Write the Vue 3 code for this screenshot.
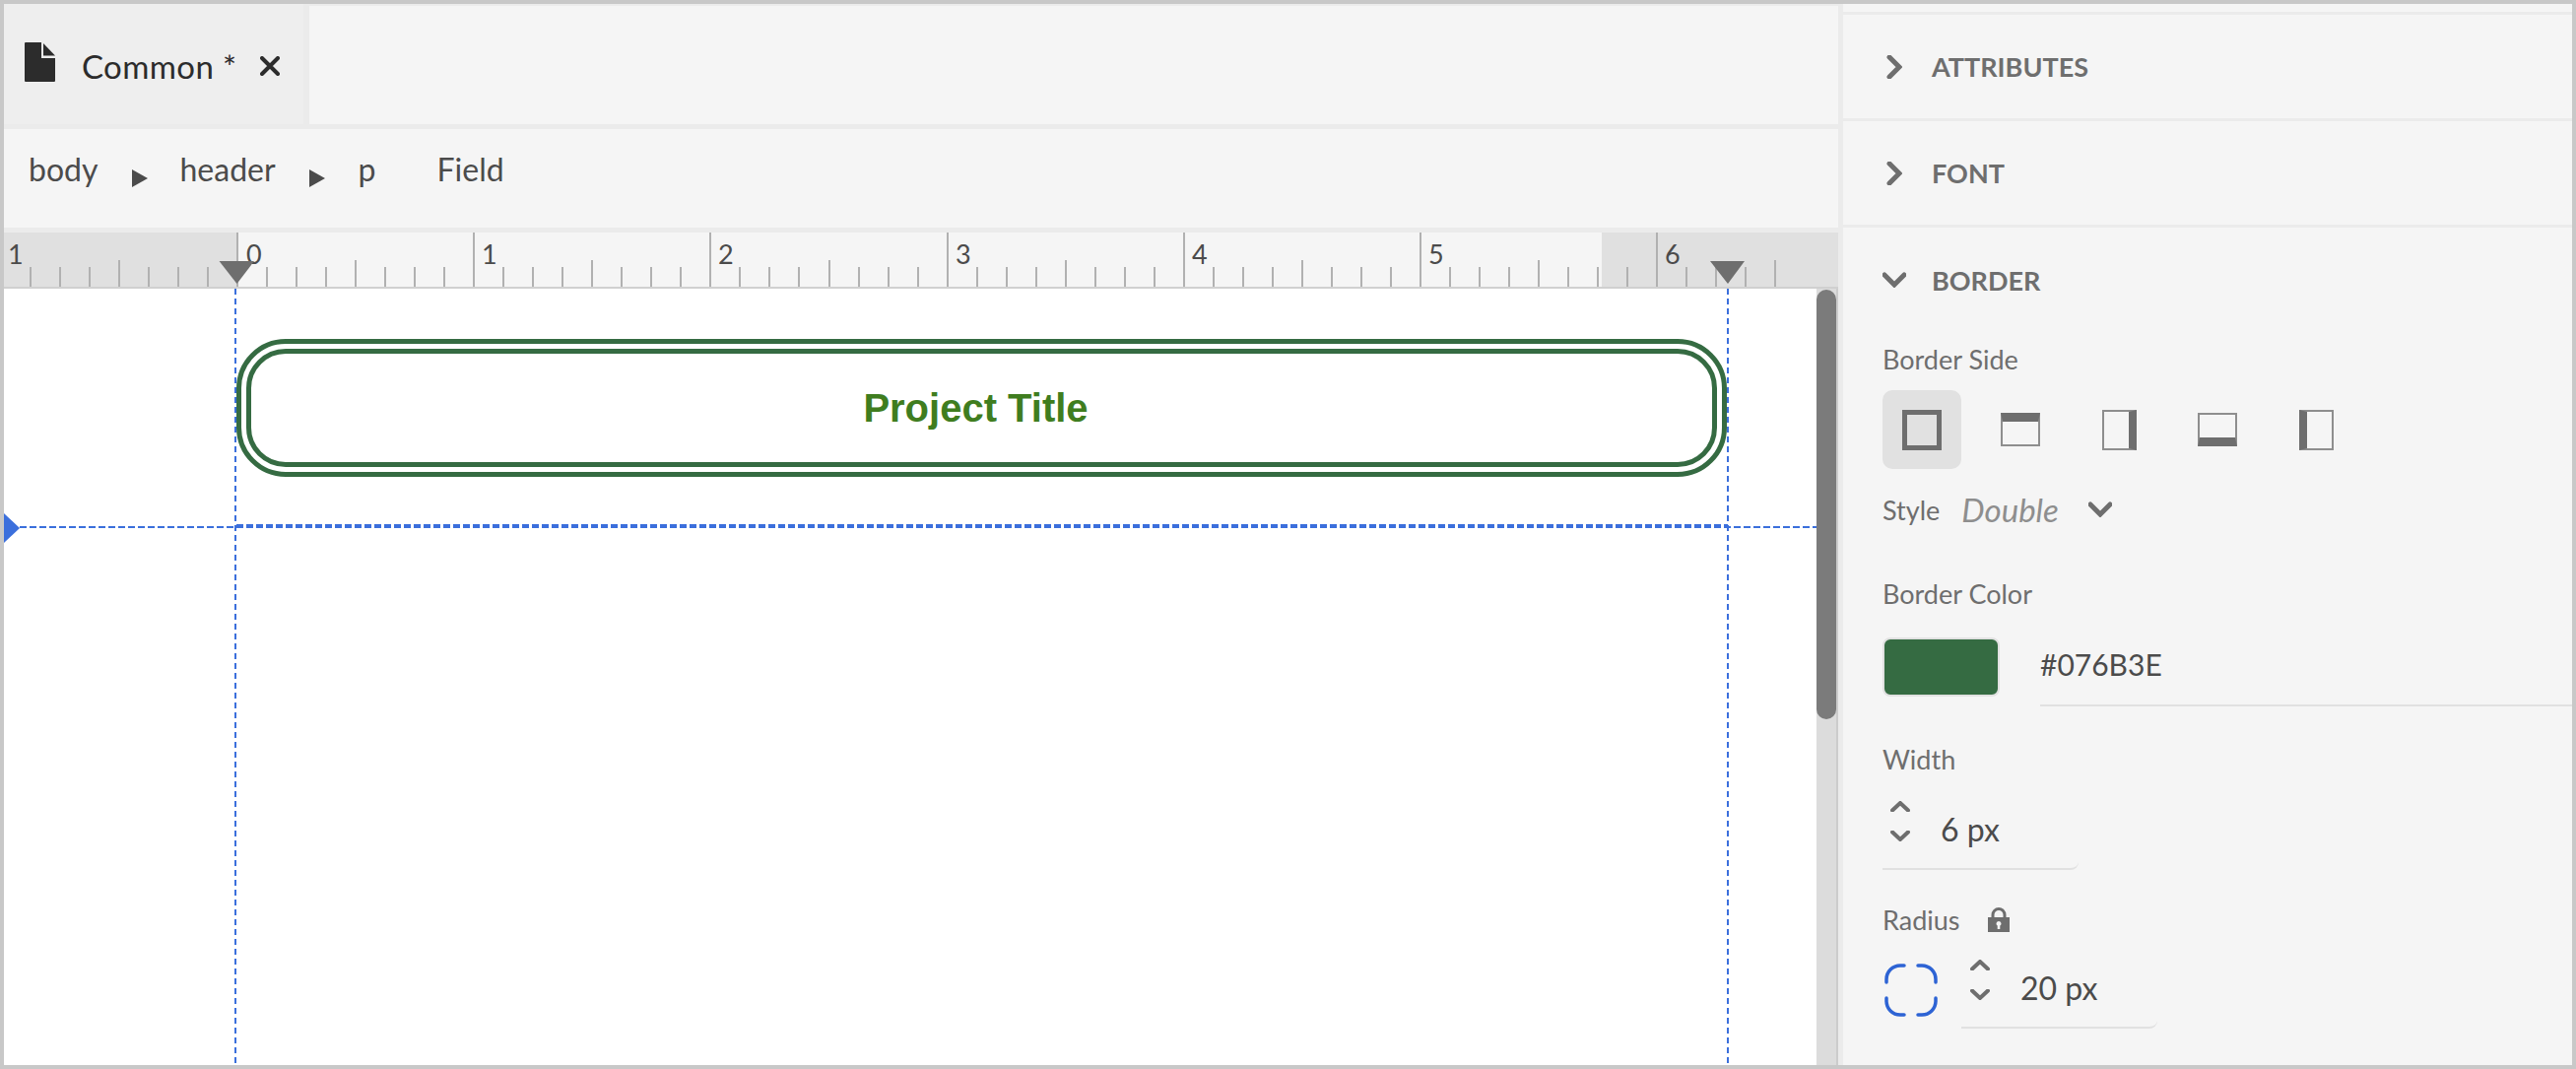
<template>
  <div class="frame">
    <div class="main">
      <!-- tabs -->
      <div class="tabbar">
        <div class="tab">
          <svg class="doc-icon" width="31" height="40" viewBox="0 0 31 40">
            <path d="M0 1 a1 1 0 0 1 1-1 H17 V16 H31 V39 a1 1 0 0 1-1 1 H1 a1 1 0 0 1-1-1 Z" fill="#2c2c2c" />
            <path d="M19 1 L31 13.500 H19 Z" fill="#2c2c2c" />
          </svg>
          <span class="tab-name">Common *</span>
          <svg class="close-icon" width="20" height="20" viewBox="0 0 20 20">
            <path d="M2 2 L18 18 M18 2 L2 18" stroke="#2c2c2c" stroke-width="4" fill="none" />
          </svg>
        </div>
        <div class="tab-rest"></div>
      </div>

      <!-- breadcrumb -->
      <div class="crumbs">
        <span class="crumb crumb-body">body</span>
        <span class="crumb-arrow"></span>
        <span class="crumb crumb-header">header</span>
        <span class="crumb-arrow"></span>
        <span class="crumb crumb-p">p</span>
        <span class="crumb crumb-field">Field</span>
      </div>

      <!-- ruler -->
      <div class="ruler">
        <svg class="ruler-svg" width="1862" height="55" viewBox="0 0 1862 55">
          <rect x="0" y="0" width="236" height="55" fill="#e0e0e0" />
          <rect x="1622" y="0" width="240" height="55" fill="#e0e0e0" />
          <rect v-for="t in ticks" :key="t.x" :x="t.x" :y="t.y" width="2" :height="55 - t.y" fill="#b1b1b1" />
          <text v-for="l in labels" :key="l.text" :x="l.x" y="32" class="ruler-num">{{ l.text }}</text>
          <path d="M218.500 29 H254 L236.500 52 Z" fill="#6e6e6e" />
          <path d="M1732 29 H1767 L1750 52 Z" fill="#6e6e6e" />
        </svg>
      </div>

      <!-- page -->
      <div class="canvas">
        <div class="field-box">
          <span class="field-title">Project Title</span>
        </div>
        <div class="guide-v guide-left"></div>
        <div class="guide-v guide-right"></div>
        <div class="guide-h guide-thin"></div>
        <div class="guide-h guide-thick"></div>
        <div class="margin-marker"></div>
        <div class="scrollbar"><div class="thumb"></div></div>
      </div>
    </div>

    <!-- properties -->
    <aside class="panel">
      <div class="section section-top"></div>
      <div class="section section-closed">
        <svg class="chev-right" width="16" height="24" viewBox="0 0 16 24">
          <path d="M3 2 L13 12 L3 22" />
        </svg>
        <span class="section-title">ATTRIBUTES</span>
      </div>
      <div class="section section-closed">
        <svg class="chev-right" width="16" height="24" viewBox="0 0 16 24">
          <path d="M3 2 L13 12 L3 22" />
        </svg>
        <span class="section-title">FONT</span>
      </div>
      <div class="section-open">
        <div class="open-head">
          <svg class="chev-down" width="24" height="16" viewBox="0 0 24 16">
            <path d="M2 3 L12 13 L22 3" />
          </svg>
          <span class="section-title">BORDER</span>
        </div>

        <div class="label label-side">Border Side</div>
        <div class="sides">
          <div class="side-btn side-active"><span class="side-icon all"></span></div>
          <div class="side-btn"><span class="side-icon wide top"></span></div>
          <div class="side-btn"><span class="side-icon tall right"></span></div>
          <div class="side-btn"><span class="side-icon wide bottom"></span></div>
          <div class="side-btn"><span class="side-icon tall left"></span></div>
        </div>

        <div class="style-row">
          <span class="label">Style</span>
          <span class="style-value">Double</span>
          <svg class="chev-down" width="24" height="16" viewBox="0 0 24 16">
            <path d="M2 3 L12 13 L22 3" />
          </svg>
        </div>

        <div class="label label-color">Border Color</div>
        <div class="color-row">
          <div class="swatch"></div>
          <div class="hex">#076B3E</div>
        </div>

        <div class="label label-width">Width</div>
        <div class="stepper stepper-width">
          <div class="arrows">
            <svg width="20" height="11" viewBox="0 0 20 11"><path d="M2 9.500 L10 2 L18 9.500" /></svg>
            <svg width="20" height="11" viewBox="0 0 20 11"><path d="M2 1.500 L10 9 L18 1.500" /></svg>
          </div>
          <span class="value">6 px</span>
        </div>

        <div class="radius-label">
          <span class="label">Radius</span>
          <svg class="lock" width="22" height="25" viewBox="0 0 22 25">
            <path d="M5 11 V7.500 a6 6 0 0 1 12 0 V11" fill="none" stroke="#6e6e6e" stroke-width="3" />
            <path fill-rule="evenodd" d="M0 10 H22 V25 H0 Z M11 14 a2.500 2.500 0 0 0-1.300 4.600 V22 h2.600 V18.600 A2.500 2.500 0 0 0 11 14 Z" fill="#6e6e6e" />
          </svg>
        </div>
        <div class="radius-row">
          <svg class="radius-icon" width="54" height="54" viewBox="0 0 54 54">
            <path d="M20 2 H16 A14 14 0 0 0 2 16 V19 M34 2 H38 A14 14 0 0 1 52 16 V19 M2 35 V38 A14 14 0 0 0 16 52 H20 M52 35 V38 A14 14 0 0 1 38 52 H34" />
          </svg>
          <div class="stepper stepper-radius">
            <div class="arrows">
              <svg width="20" height="11" viewBox="0 0 20 11"><path d="M2 9.500 L10 2 L18 9.500" /></svg>
              <svg width="20" height="11" viewBox="0 0 20 11"><path d="M2 1.500 L10 9 L18 1.500" /></svg>
            </div>
            <span class="value">20 px</span>
          </div>
        </div>
      </div>
    </aside>
  </div>
</template>

<script setup>
import { computed } from 'vue'

// ruler origin inside the svg and pixels per inch
const ZERO = 236
const INCH = 240.2

const ticks = computed(() => {
  const list = []
  for (let i = -7; i <= 52; i++) {
    const x = Math.round(ZERO + (i * INCH) / 8)
    if (x < 0 || x > 1860) continue
    let y = 35
    if (i % 8 === 0) y = 0
    else if (i % 4 === 0) y = 28
    list.push({ x, y })
  }
  return list
})

const labels = [
  { text: '1', x: 4 },
  { text: '0', x: 246 },
  ...[1, 2, 3, 4, 5, 6].map((n) => ({ text: String(n), x: Math.round(ZERO + n * INCH) + 9 }))
]
</script>

<style>
html,
body {
  margin: 0;
  background: #fff;
}
</style>

<style scoped>
.frame {
  width: 2615px;
  height: 1085px;
  box-sizing: border-box;
  border: 4px solid #c8c8c8;
  display: flex;
  overflow: hidden;
  font-family: Lato, "Noto Sans", sans-serif;
  background: #ebebeb;
}

.main {
  width: 1862px;
  flex: none;
  display: flex;
  flex-direction: column;
}

.tabbar {
  height: 122px;
  flex: none;
  display: flex;
}

.tab {
  width: 304px;
  flex: none;
  background: #eeeeee;
  display: flex;
  align-items: center;
  padding-left: 21px;
  box-sizing: border-box;
}

.doc-icon {
  margin-top: -4px;
}

.tab-name {
  margin-left: 27px;
  margin-top: 3px;
  font-size: 33px;
  letter-spacing: 0.4px;
  color: #2c2c2c;
}

.close-icon {
  margin-left: 23px;
  margin-top: 3px;
}

.tab-rest {
  flex: 1;
  margin-left: 6px;
  margin-top: 2px;
  background: #f5f5f5;
}

.crumbs {
  height: 100px;
  flex: none;
  margin-top: 5px;
  background: #f5f5f5;
  display: flex;
  align-items: center;
  padding-left: 25px;
  padding-bottom: 20px;
  box-sizing: border-box;
}

.crumb {
  font-size: 32px;
  color: #4b4b4b;
}

.crumb-arrow {
  width: 0;
  height: 0;
  border-left: 16px solid #4b4b4b;
  border-top: 9px solid transparent;
  border-bottom: 9px solid transparent;
  margin-top: 20px;
}

.crumb-body {
  margin-right: 35px;
}

.crumb-header {
  margin: 0 34px 0 32px;
}

.crumb-p {
  margin-left: 34px;
  margin-right: 62px;
}

.ruler {
  height: 57px;
  flex: none;
  margin-top: 5px;
  background: #f5f5f5;
  border-bottom: 2px solid #d0d0d0;
  box-sizing: border-box;
}

.ruler-svg {
  display: block;
}

.ruler-num {
  font-family: Lato, sans-serif;
  font-size: 27px;
  fill: #4b4b4b;
}

.canvas {
  flex: 1;
  position: relative;
  background: #fff;
  padding: 51px 0 0 236px;
  box-sizing: border-box;
  overflow: hidden;
}

.field-box {
  width: 1513px;
  height: 140px;
  box-sizing: border-box;
  border: 15px double #356b42;
  border-radius: 50px;
  display: flex;
  align-items: center;
  justify-content: center;
}

.field-title {
  font-family: "Liberation Sans", Arial, sans-serif;
  font-weight: 700;
  font-size: 40px;
  color: #3f7d1f;
  margin-right: 12px;
}

.guide-v {
  position: absolute;
  top: 0;
  bottom: 0;
  width: 2px;
  background: repeating-linear-gradient(to bottom, #3b6fdc 0 6px, transparent 6px 10px);
}

.guide-left {
  left: 234px;
}

.guide-right {
  left: 1749px;
}

.guide-h {
  position: absolute;
  height: 2px;
  background: repeating-linear-gradient(to right, #3b6fdc 0 7px, transparent 7px 10px);
}

.guide-thin {
  top: 241px;
  left: 16px;
  right: 22px;
}

.guide-thick {
  top: 239px;
  left: 236px;
  width: 1514px;
  height: 4px;
}

.margin-marker {
  position: absolute;
  left: 0;
  top: 228px;
  width: 0;
  height: 0;
  border-left: 16px solid #3b6fdc;
  border-top: 15px solid transparent;
  border-bottom: 15px solid transparent;
}

.scrollbar {
  position: absolute;
  top: 0;
  bottom: 0;
  right: 2px;
  width: 20px;
  background: #dcdcdc;
  box-shadow: 2px 0 0 #cccccc;
}

.thumb {
  height: 436px;
  margin-top: 1px;
  background: #7b7b7b;
  border-radius: 10px;
}

.panel {
  width: 741px;
  margin-left: 5px;
  flex: none;
  background: #f5f5f5;
  color: #6e6e6e;
}

.section {
  border-bottom: 3px solid #ebebeb;
  box-sizing: border-box;
}

.section-top {
  height: 11px;
}

.section-closed {
  height: 108px;
  display: flex;
  align-items: center;
  padding-left: 44px;
}

.section-title {
  font-size: 27px;
  font-weight: 700;
  color: #6e6e6e;
  margin-left: 30px;
}

svg path {
  stroke-linecap: round;
}

.chev-right path,
.chev-down path {
  fill: none;
  stroke: #6e6e6e;
  stroke-width: 5;
}

.arrows path {
  fill: none;
  stroke: #6e6e6e;
  stroke-width: 4;
}

.section-open {
  padding-left: 40px;
}

.open-head {
  display: flex;
  align-items: center;
  height: 106px;
}

.open-head .section-title {
  margin-left: 26px;
}

.label {
  font-size: 27px;
  color: #6e6e6e;
}

.label-side {
  margin-top: 12px;
  line-height: 32px;
}

.sides {
  display: flex;
  margin-top: 15px;
  gap: 20px;
}

.side-btn {
  width: 80px;
  height: 80px;
  border-radius: 10px;
  display: flex;
  align-items: center;
  justify-content: center;
}

.side-active {
  background: #e1e1e1;
}

.side-icon {
  display: block;
  box-sizing: border-box;
  border: 2px solid #8e8e8e;
  background: #f5f5f5;
}

.all {
  width: 40px;
  height: 41px;
  border: 5px solid #6e6e6e;
  background: #e1e1e1;
}

.wide {
  width: 40px;
  height: 34px;
}

.tall {
  width: 35px;
  height: 41px;
}

.top {
  border-top: 9px solid #6e6e6e;
}

.bottom {
  border-bottom: 9px solid #6e6e6e;
}

.left {
  border-left: 8px solid #6e6e6e;
}

.right {
  border-right: 8px solid #6e6e6e;
}

.style-row {
  display: flex;
  align-items: center;
  margin-top: 21px;
  height: 40px;
}

.style-value {
  font-size: 33px;
  font-style: italic;
  color: #8e8e8e;
  margin-left: 22px;
}

.style-row .chev-down {
  margin-left: 30px;
}

.label-color {
  margin-top: 50px;
  line-height: 32px;
}

.color-row {
  display: flex;
  margin-top: 28px;
  align-items: flex-start;
}

.swatch {
  width: 119px;
  height: 60px;
  box-sizing: border-box;
  background: #356b42;
  border: 2px solid #e1e1e1;
  border-radius: 8px;
  flex: none;
}

.hex {
  flex: 1;
  margin-left: 41px;
  height: 70px;
  line-height: 54px;
  box-sizing: border-box;
  border-bottom: 2px solid #e1e1e1;
  font-size: 30px;
  color: #4b4b4b;
}

.label-width {
  margin-top: 38px;
  line-height: 32px;
}

.stepper {
  display: flex;
  align-items: flex-start;
  width: 199px;
  height: 70px;
  box-sizing: border-box;
  border-bottom: 2px solid #e1e1e1;
  border-bottom-right-radius: 8px;
  padding-left: 8px;
}

.stepper-width {
  margin-top: 26px;
}

.arrows {
  display: flex;
  flex-direction: column;
  gap: 19px;
  width: 20px;
}

.arrows svg {
  display: block;
}

.value {
  font-size: 32px;
  line-height: 38px;
  margin-top: 10px;
  margin-left: 31px;
  color: #4b4b4b;
}

.radius-label {
  display: flex;
  align-items: center;
  margin-top: 34px;
  height: 32px;
}

.lock {
  margin-left: 29px;
}

.radius-row {
  display: flex;
  align-items: flex-start;
  margin-top: 25px;
}

.radius-icon {
  margin-left: 2px;
  margin-top: 4px;
  flex: none;
}

.radius-icon path {
  fill: none;
  stroke: #2d63d4;
  stroke-width: 3.5;
}

.stepper-radius {
  margin-left: 24px;
  padding-left: 9px;
}
</style>
